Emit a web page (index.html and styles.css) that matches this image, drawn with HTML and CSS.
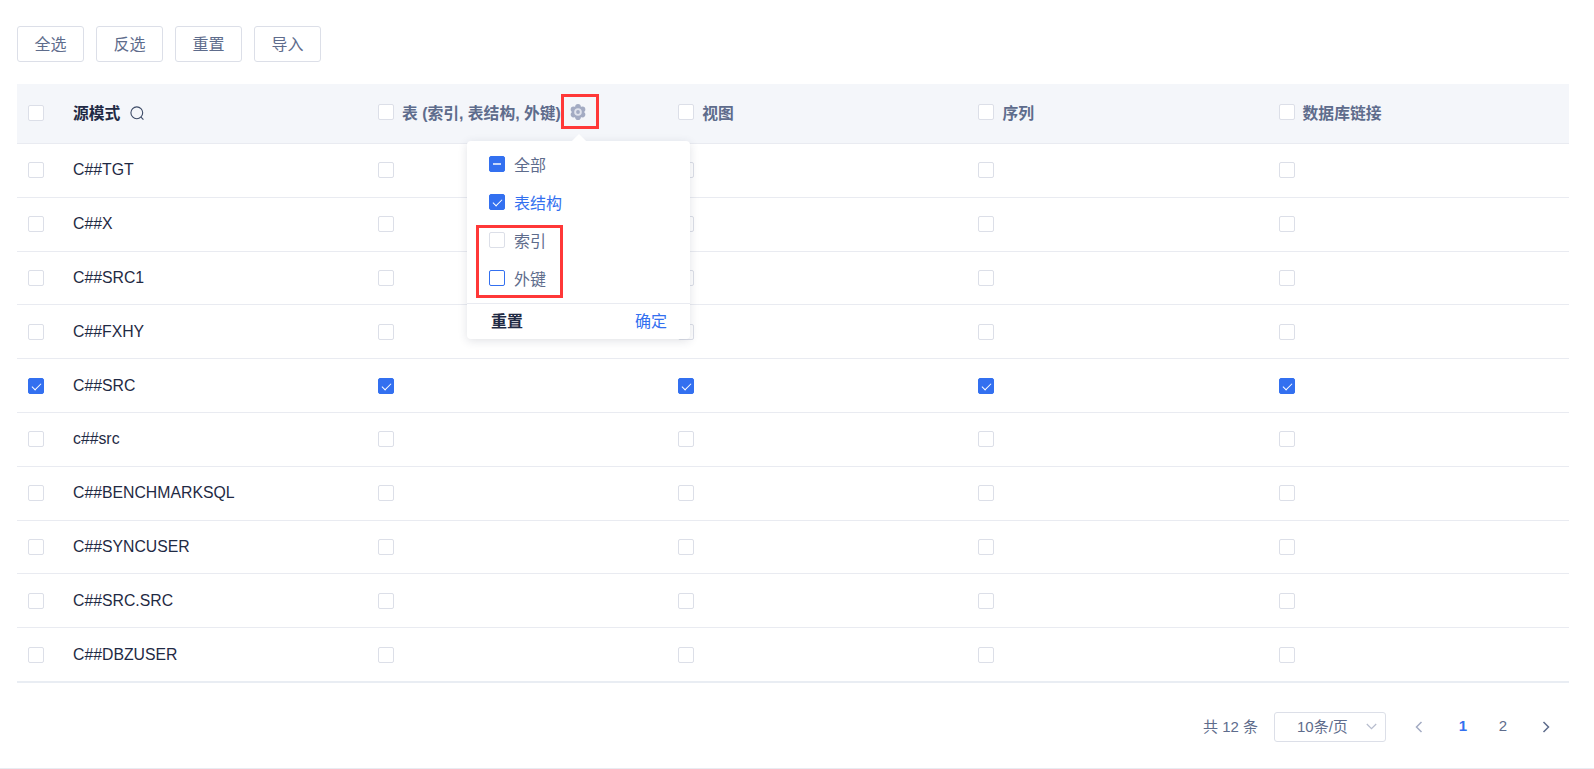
FILE: index.html
```html
<!DOCTYPE html>
<html lang="zh-CN">
<head>
    <meta charset="UTF-8">
    <meta name="viewport" content="width=device-width, initial-scale=1.0">
    <title>源模式</title>
    <link rel="stylesheet" href="styles.css">
</head>
<body>
    <div class="page">
        <div class="toolbar">
            <button class="btn">全选</button>
            <button class="btn">反选</button>
            <button class="btn">重置</button>
            <button class="btn">导入</button>
        </div>

        <table class="schema-table">
            <colgroup>
                <col class="col-check">
                <col class="col-name">
                <col class="col-obj">
                <col class="col-obj">
                <col class="col-obj">
                <col>
            </colgroup>
            <thead>
                <tr>
                    <th><span class="cb"></span></th>
                    <th class="name-head">
                        <span class="name-title">源模式</span>
                        <svg class="search-icon" width="15" height="15" viewBox="0 0 15 15" fill="none" stroke="#3c4a66" stroke-width="1.1"><circle cx="6.8" cy="6.8" r="5.9"/><path d="M11 11.200l2.400 2.500"/></svg>
                    </th>
                    <th>
                        <div class="head-cell gear-cell">
                            <span class="cb"></span><span>表 (索引, 表结构, 外键)</span>
                            <svg class="gear-icon" width="18" height="18" viewBox="0 0 18 18">
                                <g fill="#a3abc3">
                                    <circle cx="9" cy="9" r="6"/>
                                    <circle cx="9" cy="3.800" r="2.800"/>
                                    <circle cx="13.500" cy="6.400" r="2.800"/>
                                    <circle cx="13.500" cy="11.600" r="2.800"/>
                                    <circle cx="9" cy="14.200" r="2.800"/>
                                    <circle cx="4.500" cy="11.600" r="2.800"/>
                                    <circle cx="4.500" cy="6.400" r="2.800"/>
                                </g>
                                <circle cx="9" cy="9" r="3.800" fill="#dfe2ec"/>
                                <circle cx="9" cy="9" r="1.900" fill="#a3abc3"/>
                            </svg>
                            <span class="red-box gear-box"></span>
                        </div>
                    </th>
                    <th><div class="head-cell"><span class="cb"></span><span>视图</span></div></th>
                    <th><div class="head-cell"><span class="cb"></span><span>序列</span></div></th>
                    <th><div class="head-cell"><span class="cb"></span><span>数据库链接</span></div></th>
                </tr>
            </thead>
            <tbody>
                <tr><td><span class="cb"></span></td><td>C##TGT</td><td><span class="cb"></span></td><td><span class="cb"></span></td><td><span class="cb"></span></td><td><span class="cb"></span></td></tr>
                <tr><td><span class="cb"></span></td><td>C##X</td><td><span class="cb"></span></td><td><span class="cb"></span></td><td><span class="cb"></span></td><td><span class="cb"></span></td></tr>
                <tr><td><span class="cb"></span></td><td>C##SRC1</td><td><span class="cb"></span></td><td><span class="cb"></span></td><td><span class="cb"></span></td><td><span class="cb"></span></td></tr>
                <tr><td><span class="cb"></span></td><td>C##FXHY</td><td><span class="cb"></span></td><td><span class="cb"></span></td><td><span class="cb"></span></td><td><span class="cb"></span></td></tr>
                <tr><td><span class="cb checked"></span></td><td>C##SRC</td><td><span class="cb checked"></span></td><td><span class="cb checked"></span></td><td><span class="cb checked"></span></td><td><span class="cb checked"></span></td></tr>
                <tr><td><span class="cb"></span></td><td>c##src</td><td><span class="cb"></span></td><td><span class="cb"></span></td><td><span class="cb"></span></td><td><span class="cb"></span></td></tr>
                <tr><td><span class="cb"></span></td><td>C##BENCHMARKSQL</td><td><span class="cb"></span></td><td><span class="cb"></span></td><td><span class="cb"></span></td><td><span class="cb"></span></td></tr>
                <tr><td><span class="cb"></span></td><td>C##SYNCUSER</td><td><span class="cb"></span></td><td><span class="cb"></span></td><td><span class="cb"></span></td><td><span class="cb"></span></td></tr>
                <tr><td><span class="cb"></span></td><td>C##SRC.SRC</td><td><span class="cb"></span></td><td><span class="cb"></span></td><td><span class="cb"></span></td><td><span class="cb"></span></td></tr>
                <tr><td><span class="cb"></span></td><td>C##DBZUSER</td><td><span class="cb"></span></td><td><span class="cb"></span></td><td><span class="cb"></span></td><td><span class="cb"></span></td></tr>
            </tbody>
        </table>

        <div class="pager">
            <span class="pager-total">共 12 条</span>
            <div class="pager-size">
                <span>10条/页</span>
                <svg width="11" height="7" viewBox="0 0 11 7" fill="none" stroke="#b6bccd" stroke-width="1.200"><path d="M.8 1l4.700 4.700L10.200 1"/></svg>
            </div>
            <svg class="pager-prev" width="8" height="12" viewBox="0 0 8 12" fill="none" stroke="#a3abc3" stroke-width="1.500"><path d="M6.500 1l-5 5 5 5"/></svg>
            <span class="pager-num active">1</span>
            <span class="pager-num">2</span>
            <svg class="pager-next" width="8" height="12" viewBox="0 0 8 12" fill="none" stroke="#5e6c8c" stroke-width="1.500"><path d="M1.500 1l5 5-5 5"/></svg>
        </div>

        <div class="popover">
            <div class="pop-item"><span class="cb partial"></span><span>全部</span></div>
            <div class="pop-item selected"><span class="cb checked"></span><span>表结构</span></div>
            <div class="pop-item"><span class="cb"></span><span>索引</span></div>
            <div class="pop-item"><span class="cb focus"></span><span>外键</span></div>
            <div class="pop-foot">
                <span class="pop-reset">重置</span>
                <span class="pop-ok">确定</span>
            </div>
            <span class="red-box items-box"></span>
        </div>
    </div>
</body>
</html>
```

FILE: styles.css
```css
* {
    box-sizing: border-box;
}
html, body {
    margin: 0;
    height: 100%;
    overflow: hidden;
}
body {
    font-family: "Liberation Sans", "Noto Sans CJK SC", sans-serif;
    font-size: 16px;
    color: #1f2a44;
    background: #fff;
}
.page {
    position: relative;
    height: 769px;
    padding: 26px 25px 0 17px;
    border-bottom: 1px solid #e9ebf1;
}
.toolbar {
    display: flex;
    gap: 12px;
    margin-bottom: 22px;
}
.btn {
    width: 67px;
    height: 36px;
    padding: 0 0 2px;
    font: inherit;
    color: #5e6c8c;
    background: #fff;
    border: 1px solid #dcdfe8;
    border-radius: 3px;
}

.schema-table {
    width: 100%;
    table-layout: fixed;
    border-collapse: separate;
    border-spacing: 0;
}
.col-check { width: 56px; }
.col-name { width: 305px; }
.col-obj { width: 300.2px; }
.schema-table th {
    height: 60px;
    padding: 0 0 3px;
    text-align: left;
    font-size: 15.8px;
    font-weight: 700;
    color: #5e6c8c;
    background: #f4f6fa;
    border-bottom: 1px solid #e9ebf1;
}
.schema-table td {
    height: 53.8px;
    padding: 0;
    font-size: 15.8px;
    border-bottom: 1px solid #e9ebf1;
}
.schema-table tbody tr:last-child td {
    height: 54.8px;
    border-bottom: 2px solid #e9edf3;
}
.schema-table th:first-child, .schema-table td:first-child {
    padding-left: 11px;
}
.schema-table th:first-child .cb {
    margin-top: 2px;
}
.name-head {
    white-space: nowrap;
}
.name-title {
    color: #1f2a44;
}
.search-icon {
    margin-left: 5px;
    vertical-align: -2px;
}
.head-cell {
    display: flex;
    align-items: center;
    gap: 8px;
}
.gear-cell {
    position: relative;
}
.gear-icon {
    flex: none;
    margin-top: -1px;
}

.cb {
    position: relative;
    display: block;
    flex: none;
    width: 16px;
    height: 16px;
    background: #fff;
    border: 1px solid #dcdfe8;
    border-radius: 2px;
}
.cb.checked, .cb.partial {
    background: #3370f0;
    border-color: #3370f0;
}
.cb.focus {
    border-color: #3370f0;
}
.cb.checked::after {
    content: "";
    position: absolute;
    left: 5px;
    top: 2px;
    width: 4px;
    height: 8px;
    border: solid #fff;
    border-width: 0 1px 1px 0;
    transform: rotate(45deg);
}
.cb.partial::after {
    content: "";
    position: absolute;
    left: 3px;
    top: 6px;
    width: 8px;
    height: 2px;
    background: #c8d8fb;
}

.pager {
    display: flex;
    align-items: center;
    justify-content: flex-end;
    margin-top: 29px;
    padding-right: 19px;
    font-size: 15px;
    color: #5e6c8c;
}
.pager-total {
    margin-right: 16px;
}
.pager-total, .pager-num, .pager-size span {
    margin-bottom: 2px;
}
.pager-size {
    display: flex;
    align-items: center;
    justify-content: space-between;
    width: 112px;
    height: 30px;
    padding: 0 8px 0 22px;
    border: 1px solid #dcdfe8;
    border-radius: 3px;
    margin-right: 29px;
}
.pager-num {
    width: 40px;
    text-align: center;
}
.pager-num.active {
    font-weight: 700;
    color: #3370f0;
}
.pager-prev {
    margin-right: 20px;
}
.pager-next {
    margin-left: 19px;
}

.popover {
    position: absolute;
    left: 467px;
    top: 141px;
    width: 223px;
    height: 198px;
    padding-top: 4px;
    background: #fff;
    border-radius: 4px;
    box-shadow: 0 2px 10px rgba(40, 50, 80, 0.14);
}
.popover::before {
    content: "";
    position: absolute;
    left: 107px;
    top: -5px;
    width: 10px;
    height: 10px;
    background: #fff;
    transform: rotate(45deg);
}
.pop-item {
    position: relative;
    display: flex;
    align-items: center;
    gap: 9px;
    height: 38px;
    padding-left: 22px;
    color: #5e6c8c;
}
.pop-item.selected {
    color: #3370f0;
}
.pop-foot {
    display: flex;
    justify-content: space-between;
    align-items: center;
    height: 36px;
    margin-top: 6px;
    padding: 0 23px 3px 24px;
    border-top: 1px solid #e9ebf1;
}
.pop-reset {
    font-weight: 700;
    color: #1f2a44;
}
.pop-ok {
    color: #3370f0;
}

.red-box {
    position: absolute;
    border: 3px solid #ff3838;
}
.gear-box {
    left: 183px;
    top: -7px;
    width: 38px;
    height: 35px;
}
.items-box {
    left: 9px;
    top: 84px;
    width: 87px;
    height: 73px;
}
```
